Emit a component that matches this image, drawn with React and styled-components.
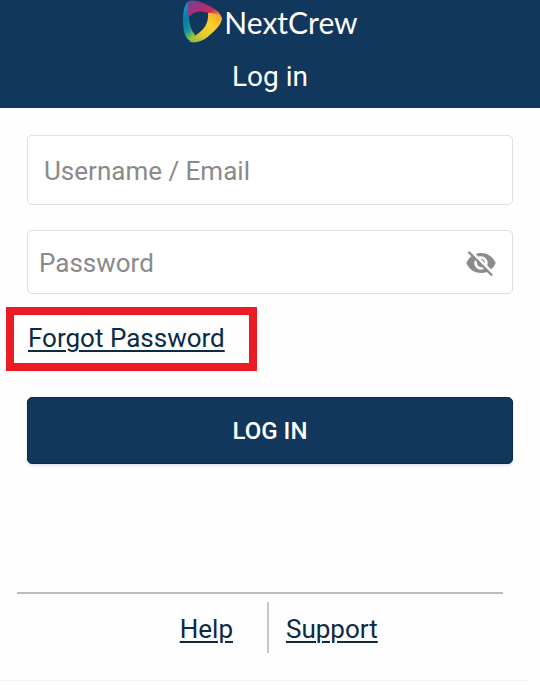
import React, { useState } from "react";
import styled, { createGlobalStyle } from "styled-components";
import { MdVisibility, MdVisibilityOff } from "react-icons/md";

const GlobalStyle = createGlobalStyle`
  * {
    box-sizing: border-box;
  }

  body {
    margin: 0;
    background: #fefefe;
    font-family: Roboto, "Liberation Sans", sans-serif;
    font-size: 26px;
    line-height: 32px;
  }
`;

const Header = styled.header`
  display: flex;
  flex-direction: column;
  align-items: center;
  gap: 16px;
  padding-bottom: 15px;
  background: #12375c;
  color: #fff;
`;

const Brand = styled.div`
  display: flex;
  align-items: center;
  gap: 2px;
  height: 45px;
  padding-bottom: 2px;

  svg {
    display: block;
    width: 40px;
    height: 43px;
  }
`;

const BrandName = styled.span`
  font-family: Lato, sans-serif;
  font-size: 30px;
  font-weight: 400;
`;

const Title = styled.h1`
  margin: 0;
  font-size: 28px;
  font-weight: 400;
`;

const Form = styled.form`
  display: flex;
  flex-direction: column;
  padding: 27px 27px 0;
`;

const Field = styled.label`
  display: flex;
  align-items: center;
  height: ${(props) => (props.$tall ? 70 : 64)}px;
  margin-bottom: ${(props) => (props.$tall ? 25 : 13)}px;
  padding: ${(props) => (props.$tall ? "2px 16px 0" : "2px 13px 0 11px")};
  border: 1px solid #dfdfdf;
  border-radius: 5px;
  background: #fff;
`;

const Input = styled.input`
  flex: 1;
  min-width: 0;
  padding: 0;
  border: 0;
  outline: 0;
  background: transparent;
  color: #12375c;
  font: inherit;

  &::placeholder {
    color: #8a8a8a;
    opacity: 1;
  }
`;

const IconButton = styled.button`
  display: flex;
  margin: 0 2px;
  padding: 0;
  border: 0;
  background: none;
  color: #8b8b8d;
  font-size: 32px;
  cursor: pointer;
`;

const TextLink = styled.a`
  color: #0b2a45;
  text-decoration: underline;
  text-decoration-thickness: 2px;
  text-underline-offset: 3px;
`;

const Highlight = styled.div`
  align-self: flex-start;
  margin: 0 0 26px -21px;
  padding: 7px 24px 9px 14px;
  border: 8px solid #ec1c24;
`;

const LoginButton = styled.button`
  height: 67px;
  border: 1px solid #0b2a45;
  border-radius: 5px;
  background: #12375c;
  box-shadow: 0 2px 3px #dfe5f0;
  color: #fff;
  font: inherit;
  font-size: 24px;
  font-weight: 500;
  cursor: pointer;
`;

const Footer = styled.footer`
  margin-top: 128px;
  margin-right: 10px;
  padding-bottom: 27px;
  border-bottom: 1px solid #f3f3f3;
`;

const Links = styled.nav`
  display: grid;
  grid-template-columns: 1fr 1fr;
  margin: 0 27px 0 17px;
  padding-top: 8px;
  border-top: 2px solid #bdbdbd;
`;

const LinkCell = styled.div`
  padding: 11px 17px 8px;

  &:first-child {
    margin-right: -9px;
    padding-right: 34px;
    border-right: 2px solid #c8c8c8;
    text-align: right;
  }

  &:last-child {
    padding-left: 26px;
  }
`;

const LogoMark = () => (
  <svg viewBox="0 0 40 43" aria-hidden="true">
    <defs>
      <linearGradient id="left" x1="0" y1="0" x2="0.4" y2="1">
        <stop offset="0" stopColor="#2b9fc0" />
        <stop offset="0.45" stopColor="#087bab" />
        <stop offset="0.75" stopColor="#16979a" />
        <stop offset="1" stopColor="#a5c53c" />
      </linearGradient>
      <linearGradient id="top" x1="0" y1="0" x2="1" y2="0.6">
        <stop offset="0" stopColor="#65489a" />
        <stop offset="0.45" stopColor="#ad2d79" />
        <stop offset="0.75" stopColor="#c62c62" />
        <stop offset="1" stopColor="#ee8438" />
      </linearGradient>
      <linearGradient id="right" x1="1" y1="0" x2="0.1" y2="1">
        <stop offset="0" stopColor="#f6a32b" />
        <stop offset="0.4" stopColor="#fbd02c" />
        <stop offset="0.7" stopColor="#e9c92e" />
        <stop offset="1" stopColor="#8cba45" />
      </linearGradient>
    </defs>
    <path d="M7 1C2 4 1 12 1 21c0 10 2 17 6 19 3 2 6 2 9 1l-3-6C9 30 7 24 7 17 6 11 6 6 7 1Z" fill="url(#left)" />
    <path d="M7 1c4-1 9 0 14 2 9 4 17 8 19 15-4-3-9-5-14-5-6-2-10-2-14 0-2 1-4 2-5 4C5 11 5 5 7 1Z" fill="url(#top)" />
    <path d="M26 13c7 0 12 2 14 5 0 5-5 11-11 16-4 4-9 7-14 8-4 1-7 0-8-1 3-1 5-3 7-6 8-5 13-12 12-22Z" fill="url(#right)" />
  </svg>
);

const App = () => {
  const [visible, setVisible] = useState(false);

  return (
    <>
      <GlobalStyle />
      <Header>
        <Brand>
          <LogoMark />
          <BrandName>NextCrew</BrandName>
        </Brand>
        <Title>Log in</Title>
      </Header>
      <Form onSubmit={(e) => e.preventDefault()}>
        <Field $tall htmlFor="username">
          <Input
            id="username"
            type="text"
            placeholder="Username / Email"
            aria-label="Username / Email"
          />
        </Field>
        <Field htmlFor="password">
          <Input
            id="password"
            type={visible ? "text" : "password"}
            placeholder="Password"
            aria-label="Password"
          />
          <IconButton
            type="button"
            aria-label="Toggle password visibility"
            onClick={() => setVisible(!visible)}
          >
            {visible ? <MdVisibility /> : <MdVisibilityOff />}
          </IconButton>
        </Field>
        <Highlight>
          <TextLink href="#forgot">Forgot Password</TextLink>
        </Highlight>
        <LoginButton type="submit">LOG IN</LoginButton>
      </Form>
      <Footer>
        <Links>
          <LinkCell>
            <TextLink href="#help">Help</TextLink>
          </LinkCell>
          <LinkCell>
            <TextLink href="#support">Support</TextLink>
          </LinkCell>
        </Links>
      </Footer>
    </>
  );
};

export default App;
